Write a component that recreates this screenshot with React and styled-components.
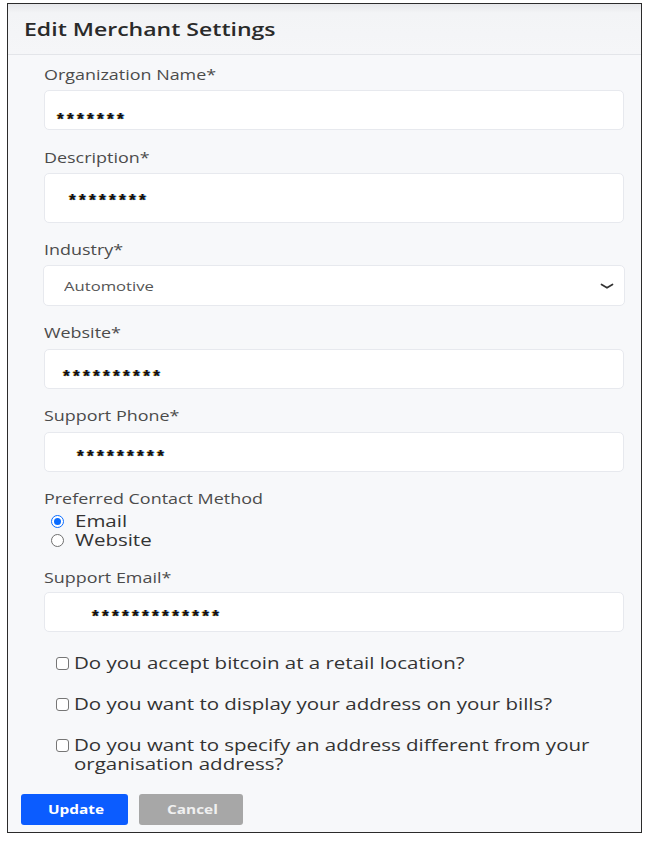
import React, { useState } from 'react';
import styled, { createGlobalStyle } from 'styled-components';

const GlobalStyle = createGlobalStyle`
  html, body {
    margin: 0;
    padding: 0;
    background: #ffffff;
  }
  body {
    font-family: "Open Sans", "Noto Sans", "Liberation Sans", sans-serif;
  }
`;

// the screenshot's text is drawn wide, so every text run is stretched sideways
const Wide = styled.span`
  display: inline-block;
  white-space: ${p => (p.$wrap ? 'normal' : 'nowrap')};
  width: ${p => (p.$w ? `${p.$w}px` : 'auto')};
  transform: scaleX(1.28);
  transform-origin: left center;
`;

const Page = styled.div`
  padding: 3px 0 0 7px;
  width: 650px;
  height: 842px;
  box-sizing: border-box;
`;

const Frame = styled.div`
  width: 635px;
  height: 830px;
  box-sizing: border-box;
  border: 1.5px solid #2b2b2b;
  border-top-width: 1px;
  background: #f7f8fa;
  display: flex;
  flex-direction: column;
`;

const Header = styled.div`
  height: 51px;
  flex-shrink: 0;
  box-sizing: border-box;
  display: flex;
  align-items: center;
  padding: 0 16px;
  background: linear-gradient(#e6e7ea 0px, #f3f4f6 9px, #f5f6f8 100%);
  border-bottom: 1px solid #e3e5e9;
  font-size: 18px;
  font-weight: 600;
  color: #2a2a2a;
`;

const Body = styled.div`
  display: flex;
  flex-direction: column;
  padding: 10px 17px 0 36px;
`;

const Group = styled.div`
  display: flex;
  flex-direction: column;
  margin-top: ${p => p.$top ?? 17.5}px;
  &:first-child {
    margin-top: 0;
  }
`;

const Label = styled.div`
  font-size: 14px;
  line-height: 20px;
  color: #4b4b4b;
  margin-bottom: ${p => p.$gap ?? 5}px;
`;

const Input = styled.div`
  height: ${p => p.$h ?? 40}px;
  box-sizing: border-box;
  background: #ffffff;
  border: 1px solid #e7e9ee;
  border-radius: 5px;
  display: flex;
  align-items: center;
  padding-left: ${p => p.$indent ?? 12}px;
`;

const Stars = styled.span`
  font-family: "Liberation Sans", Arial, sans-serif;
  font-weight: 700;
  font-size: 17px;
  letter-spacing: 3.4px;
  color: #111;
  line-height: 1;
  margin-top: ${p => 10 + 2 * (p.$dy ?? 0)}px;
  text-shadow: -0.6px 0 #d19a1c, 0.6px 0 #1a6fd0;
`;

const Select = styled.div`
  height: 41px;
  margin: 0 -1px;
  box-sizing: border-box;
  background: #ffffff;
  border: 1px solid #e7e9ee;
  border-radius: 5px;
  display: flex;
  align-items: center;
  justify-content: space-between;
  padding: 0 10px 0 20px;
  font-size: 13px;
  color: #555;
`;

const RadioList = styled.div`
  display: flex;
  flex-direction: column;
  padding-left: 7px;
  margin-top: -1px;
`;

const RadioRow = styled.label`
  display: flex;
  align-items: center;
  gap: 11px;
  height: 19.5px;
  font-size: 16px;
  line-height: 19px;
  color: #333;
`;

const RadioDot = styled.span`
  flex-shrink: 0;
  width: 13px;
  height: 13px;
  box-sizing: border-box;
  border-radius: 50%;
  border: 1px solid ${p => (p.$on ? '#0a6cff' : '#6f6f6f')};
  background: #fff;
  display: flex;
  align-items: center;
  justify-content: center;
  &::after {
    content: '';
    width: 7px;
    height: 7px;
    border-radius: 50%;
    background: ${p => (p.$on ? '#0a6cff' : 'transparent')};
  }
`;

const Checks = styled.div`
  display: flex;
  flex-direction: column;
  gap: 21.5px;
  padding-left: 48px;
  margin-top: 22px;
`;

const CheckRow = styled.label`
  display: flex;
  align-items: flex-start;
  gap: 5px;
  font-size: 16px;
  line-height: 19.5px;
  color: #333;
`;

const Box = styled.span`
  flex-shrink: 0;
  width: 13px;
  height: 13px;
  margin-top: 3.5px;
  box-sizing: border-box;
  border: 1px solid #767676;
  border-radius: 3px;
  background: #fff;
`;

const Footer = styled.div`
  display: flex;
  gap: 11px;
  padding: 19px 0 0 13px;
`;

const Button = styled.button`
  height: 31px;
  width: ${p => p.$w}px;
  padding: 0 0 0 ${p => p.$pad}px;
  text-align: left;
  border: none;
  border-radius: 3px;
  background: ${p => (p.$primary ? '#0b5cff' : '#a7a7a7')};
  color: ${p => (p.$primary ? '#ffffff' : '#f0f0f0')};
  font-family: "Open Sans", "Noto Sans", sans-serif;
  font-size: 12px;
  font-weight: 700;
  cursor: pointer;
`;

const Chevron = () => (
  <svg width="14" height="14" viewBox="0 0 14 14">
    <path d="M1.5 5.5 L7 8.8 L12.5 5.5" fill="none" stroke="#333" strokeWidth="1.7" strokeLinecap="round" strokeLinejoin="round" />
  </svg>
);

export default function App() {
  const [method, setMethod] = useState('email');

  return (
    <Page>
      <GlobalStyle />
      <Frame>
        <Header><Wide>Edit Merchant Settings</Wide></Header>
        <Body>
          <Group>
            <Label><Wide>Organization Name*</Wide></Label>
            <Input $indent={12}><Stars $dy={4}>*******</Stars></Input>
          </Group>
          <Group>
            <Label><Wide>Description*</Wide></Label>
            <Input $h={50} $indent={24}><Stars $dy={-2}>********</Stars></Input>
          </Group>
          <Group>
            <Label><Wide>Industry*</Wide></Label>
            <Select>
              <Wide>Automotive</Wide>
              <Chevron />
            </Select>
          </Group>
          <Group $top={16.5}>
            <Label $gap={6}><Wide>Website*</Wide></Label>
            <Input $indent={18}><Stars $dy={3}>**********</Stars></Input>
          </Group>
          <Group $top={17}>
            <Label $gap={6}><Wide>Support Phone*</Wide></Label>
            <Input $indent={32}><Stars>*********</Stars></Input>
          </Group>
          <Group $top={17}>
            <Label $gap={4}><Wide>Preferred Contact Method</Wide></Label>
            <RadioList>
              <RadioRow onClick={() => setMethod('email')}>
                <RadioDot $on={method === 'email'} />
                <Wide>Email</Wide>
              </RadioRow>
              <RadioRow onClick={() => setMethod('website')}>
                <RadioDot $on={method === 'website'} />
                <Wide>Website</Wide>
              </RadioRow>
            </RadioList>
          </Group>
          <Group $top={17}>
            <Label $gap={4}><Wide>Support Email*</Wide></Label>
            <Input $indent={47}><Stars>*************</Stars></Input>
          </Group>
        </Body>
        <Checks>
          <CheckRow><Box /><Wide>Do you accept bitcoin at a retail location?</Wide></CheckRow>
          <CheckRow><Box /><Wide>Do you want to display your address on your bills?</Wide></CheckRow>
          <CheckRow>
            <Box />
            <Wide $wrap $w={412}>Do you want to specify an address different from your organisation address?</Wide>
          </CheckRow>
        </Checks>
        <Footer>
          <Button $primary $w={107} $pad={27}><Wide>Update</Wide></Button>
          <Button $w={104} $pad={28}><Wide>Cancel</Wide></Button>
        </Footer>
      </Frame>
    </Page>
  );
}
